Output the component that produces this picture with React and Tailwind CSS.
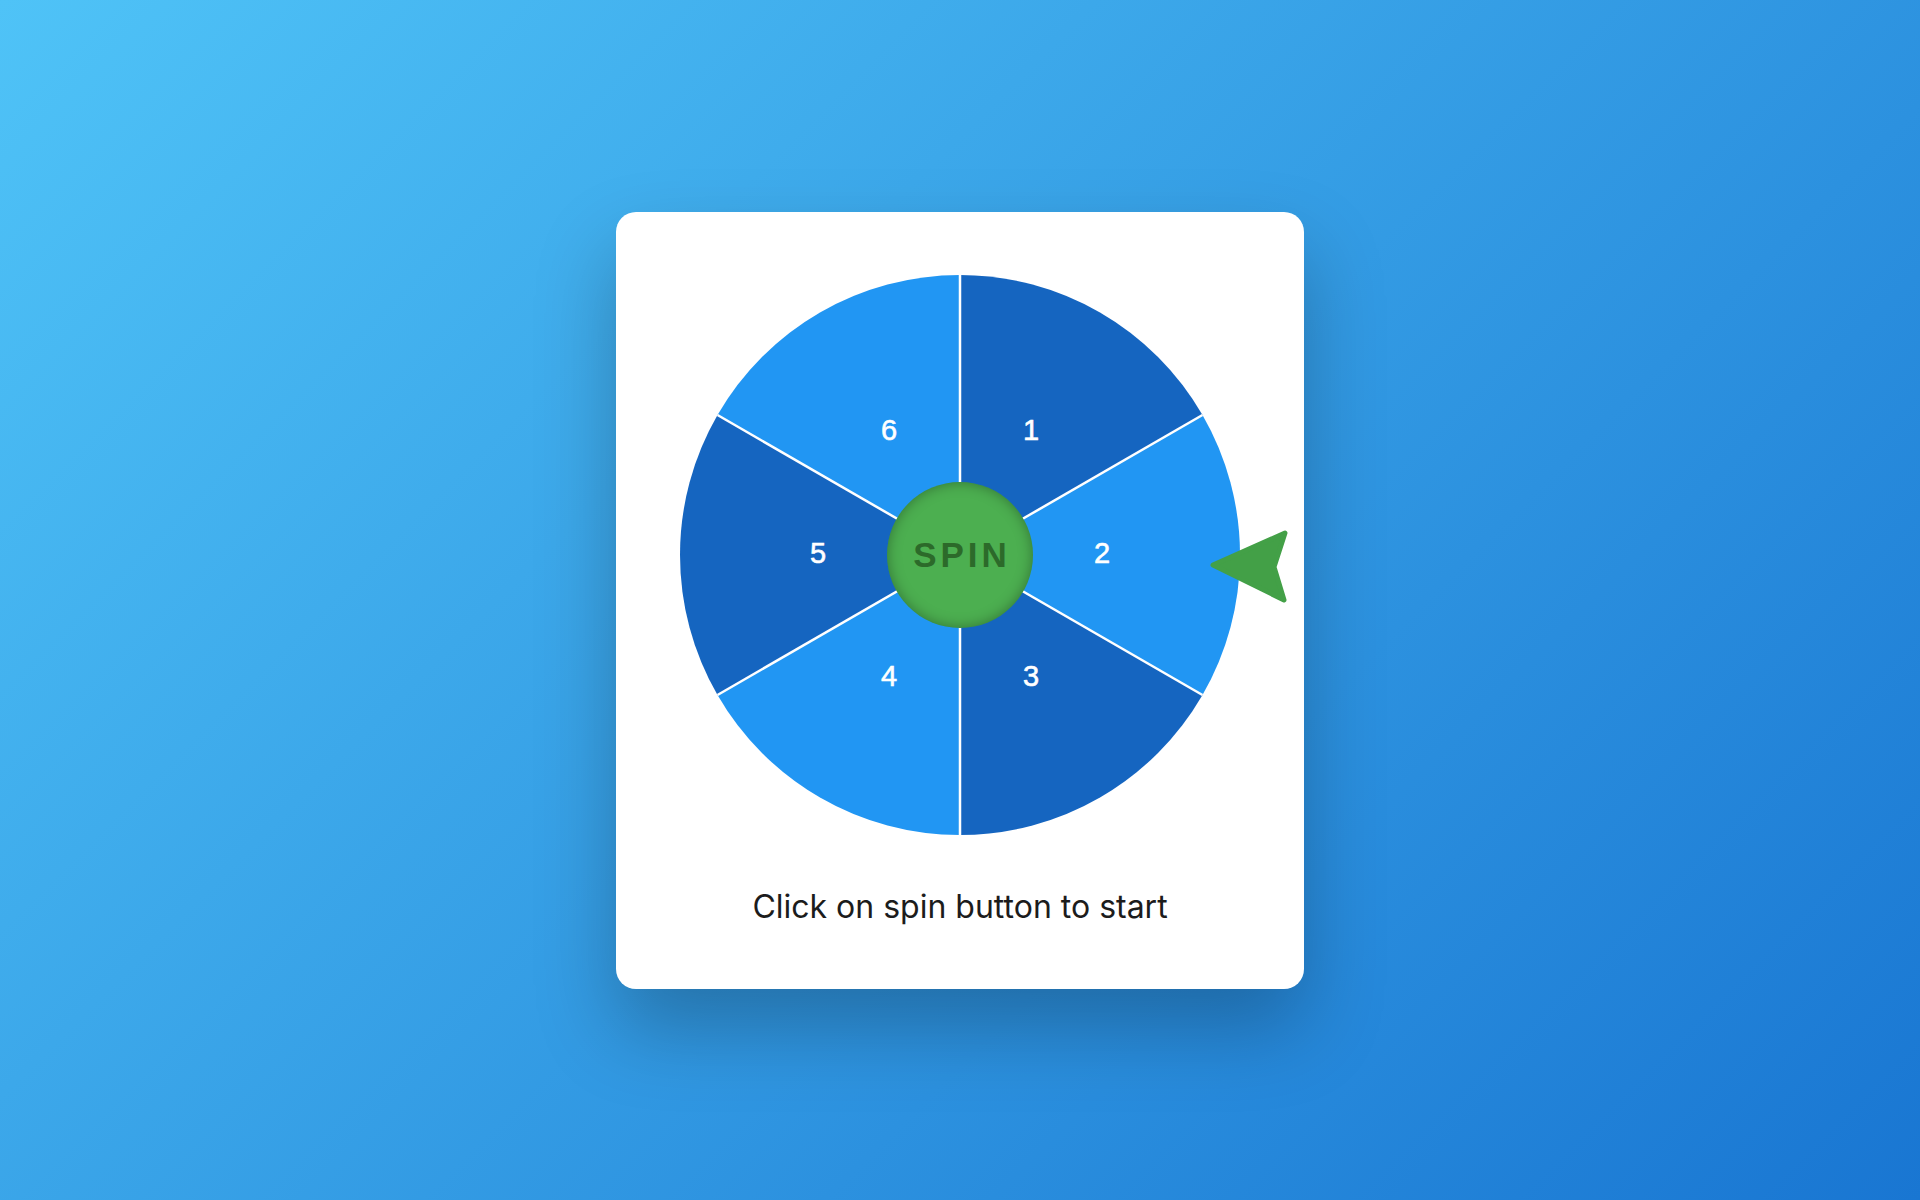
import React from 'react';

// six segments of the wheel, clockwise from the top
const segments = [
  { label: '1', color: '#1565c0' },
  { label: '2', color: '#2196f3' },
  { label: '3', color: '#1565c0' },
  { label: '4', color: '#2196f3' },
  { label: '5', color: '#1565c0' },
  { label: '6', color: '#2196f3' },
];

const R = 280;
const point = (deg, r) => {
  const a = (deg * Math.PI) / 180;
  return [R + r * Math.sin(a), R - r * Math.cos(a)];
};

function Wheel() {
  return (
    <svg width="560" height="560" viewBox="0 0 560 560" className="block">
      {segments.map((s, i) => {
        const [x1, y1] = point(i * 60, R);
        const [x2, y2] = point((i + 1) * 60, R);
        return (
          <path
            key={s.label}
            d={`M ${R} ${R} L ${x1} ${y1} A ${R} ${R} 0 0 1 ${x2} ${y2} Z`}
            fill={s.color}
          />
        );
      })}
      {segments.map((s, i) => {
        const [x, y] = point(i * 60, R);
        return <line key={'l' + i} x1={R} y1={R} x2={x} y2={y} stroke="#ffffff" strokeWidth="2.5" />;
      })}
      {segments.map((s, i) => {
        const [x, y] = point(i * 60 + 30, 142);
        return (
          <text
            key={'t' + i}
            x={x}
            y={y + 8}
            fill="#ffffff"
            stroke="#ffffff"
            strokeWidth="0.6"
            fontSize="29"
            fontFamily="'Liberation Sans', Arial, sans-serif"
            textAnchor="middle"
          >
            {s.label}
          </text>
        );
      })}
    </svg>
  );
}

// green arrow on the right side of the wheel
function Pointer() {
  return (
    <svg
      width="86"
      height="80"
      viewBox="0 0 86 80"
      className="absolute left-[526px] top-[252px]"
    >
      <path
        d="M 7 38 L 79 6 L 68 40 L 78 73 Z"
        fill="#43a047"
        stroke="#43a047"
        strokeWidth="5"
        strokeLinejoin="round"
      />
    </svg>
  );
}

export default function App() {
  return (
    <div className="min-h-screen flex items-center justify-center bg-[linear-gradient(135deg,#4fc3f7,#1976d2)]">
      <div className="bg-white rounded-[20px] pt-[63px] px-16 pb-[62px] flex flex-col items-center shadow-[0_40px_80px_rgba(0,0,0,0.25)]">
        <div className="relative w-[560px] h-[560px]">
          <Wheel />
          <Pointer />
          <button className="absolute left-[207px] top-[207px] w-[146px] h-[146px] rounded-full bg-[#4caf50] shadow-[inset_0_0_14px_rgba(0,0,0,0.35)] flex items-center justify-center">
            <span className="font-['Liberation_Sans',Arial,sans-serif] font-bold text-[35px] leading-none tracking-[4px] text-[#2c6a2a] pl-[4px]">
              SPIN
            </span>
          </button>
        </div>
        <p className="mt-[52px] font-['Inter',sans-serif] text-[32px] leading-[40px] text-[#1c1c1c]">
          Click on spin button to start
        </p>
      </div>
    </div>
  );
}
